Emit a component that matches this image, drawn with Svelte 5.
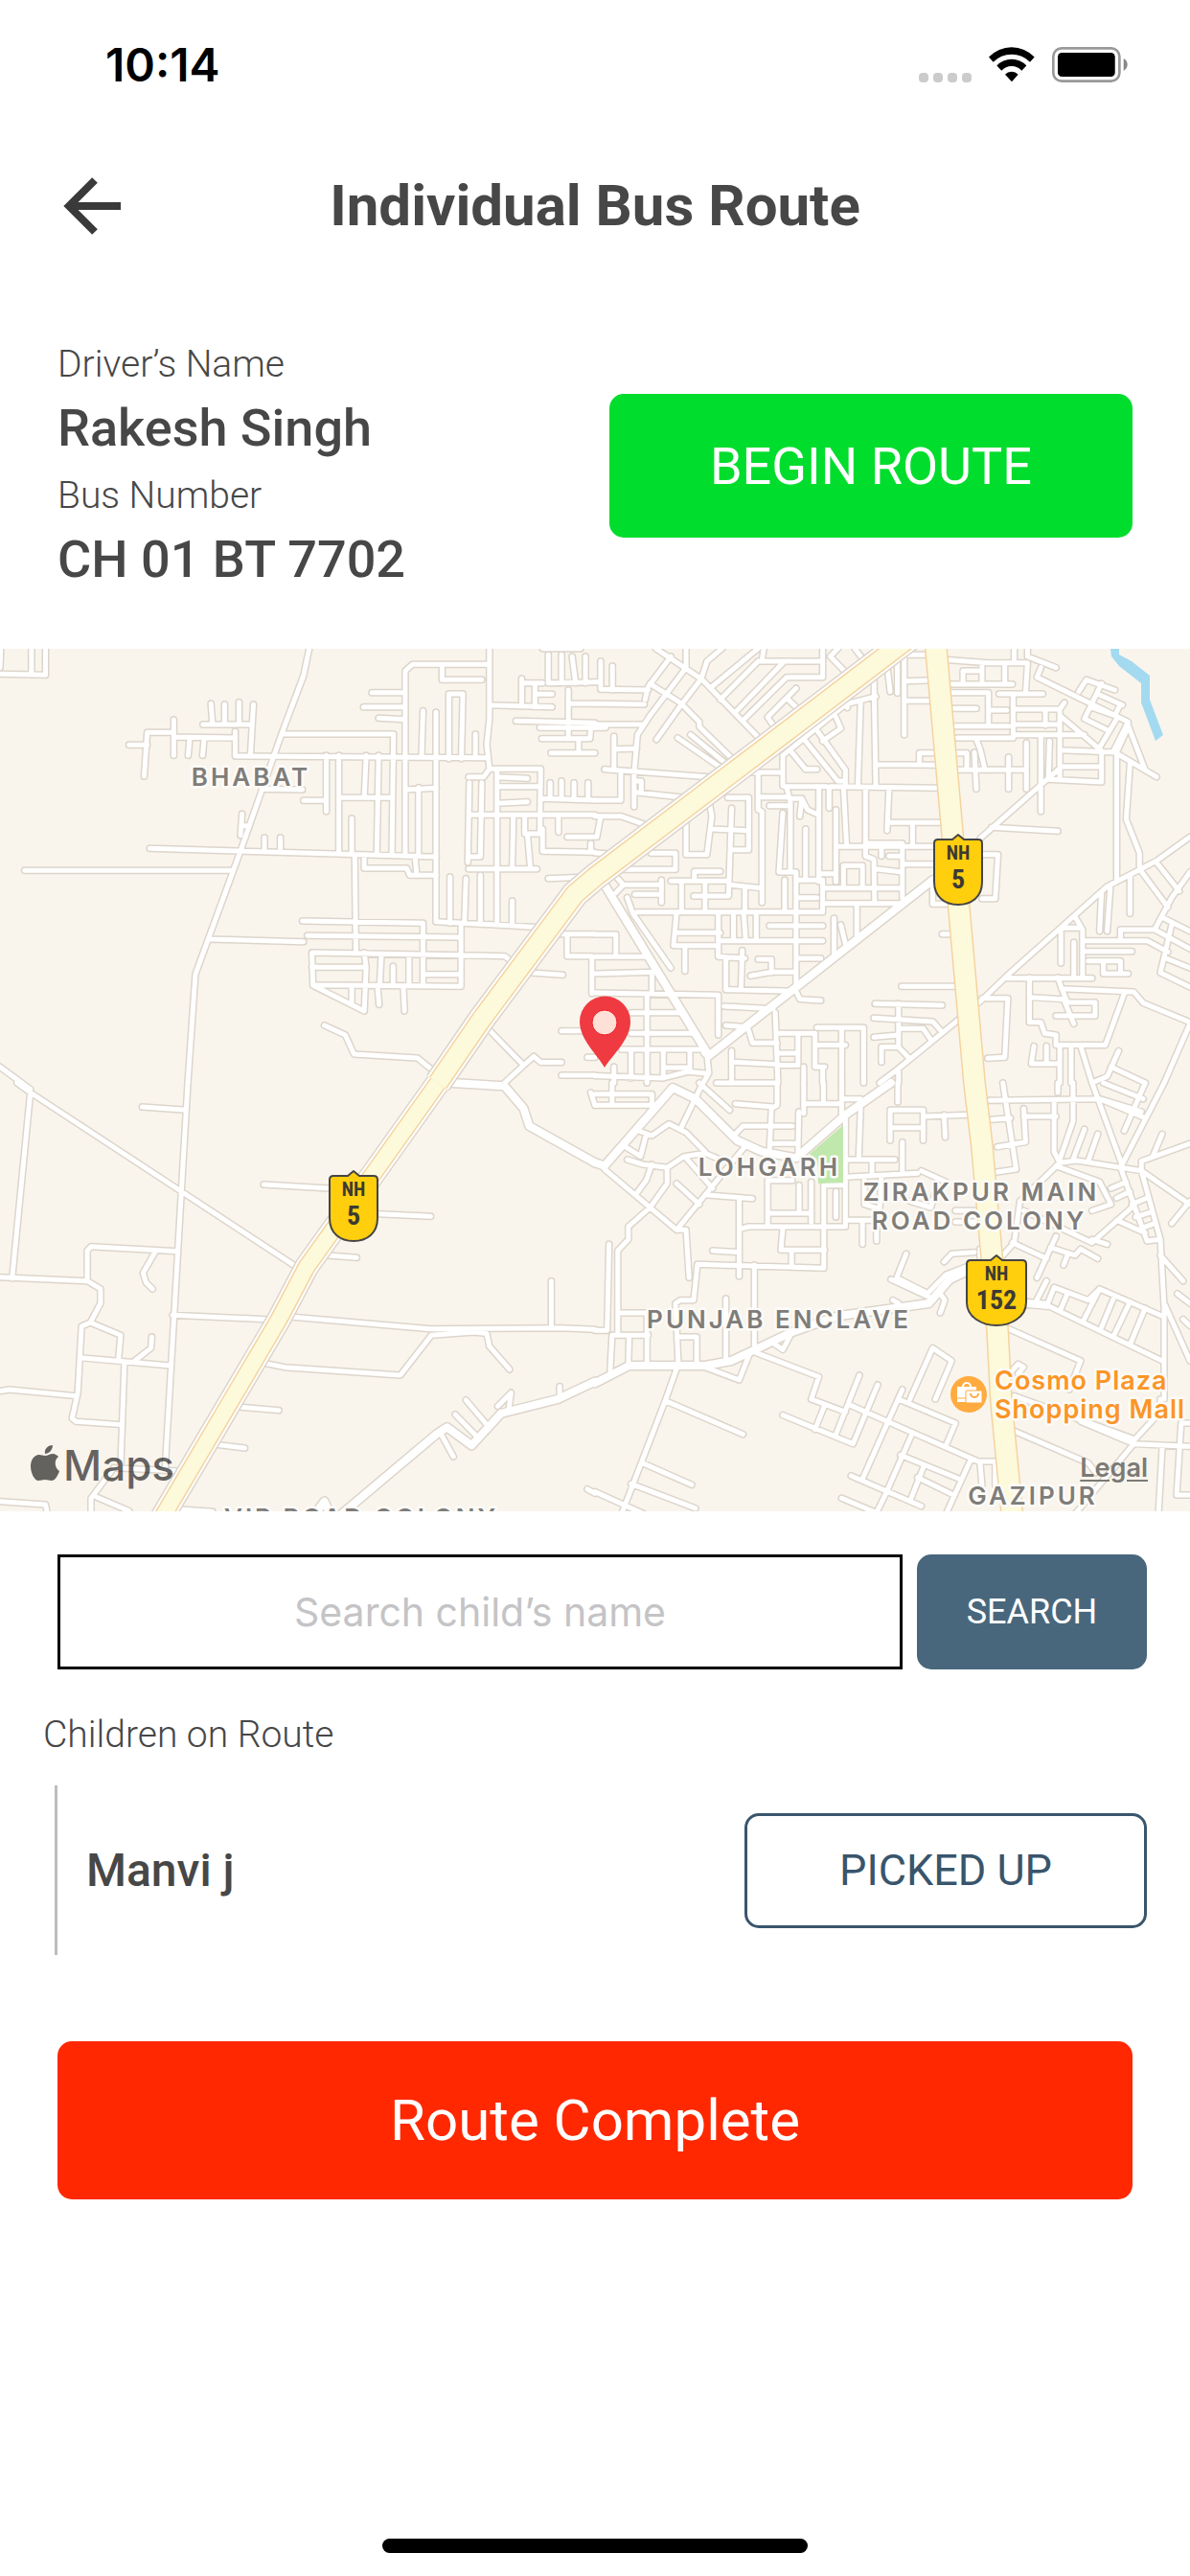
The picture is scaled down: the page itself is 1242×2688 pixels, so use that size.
<style>
  :global(body) {
    margin: 0;
    background: white;
  }

  .page {
    min-height: 100vh;
    display: flex;
    flex-direction: column;
    background: white;
    color: #474747;
    font-family: Roboto, "Liberation Sans", sans-serif;
  }

  button {
    border: none;
    border-radius: 15px;
    padding: 0;
    font-family: inherit;
    cursor: pointer;
  }

  .status-bar {
    display: flex;
    align-items: center;
    justify-content: space-between;
    height: 134px;
    padding: 0 65px 0 110px;
    box-sizing: border-box;
    color: black;
    font-family: Inter, sans-serif;
    font-size: 48px;
    font-weight: 600;
  }

  .status-icons {
    display: flex;
    align-items: flex-end;
    gap: 18px;
  }

  .dots {
    display: flex;
    gap: 5px;
  }

  .dots span {
    width: 10px;
    height: 10px;
    border-radius: 4px;
    background: #cbcbcb;
  }

  .status-icons svg {
    display: block;
  }

  .header {
    display: grid;
    grid-template-columns: 1fr auto 1fr;
    align-items: center;
    height: 162px;
    padding: 0 66px;
  }

  .back {
    justify-self: start;
    width: 60px;
    height: 60px;
    background: none;
  }

  .back svg {
    display: block;
  }

  h1 {
    margin: 0;
    font-size: 60px;
    font-weight: 700;
    line-height: 70px;
  }

  .info {
    display: flex;
    align-items: center;
    justify-content: space-between;
    padding: 60px 60px 61px;
  }

  dl {
    margin: 0;
  }

  dt,
  h2 {
    margin: 0;
    font-size: 39px;
    font-weight: 300;
    line-height: 48px;
  }

  dd {
    margin: 11px 0 14px;
    font-size: 54px;
    font-weight: 500;
    line-height: 64px;
  }

  dd:last-child {
    margin-bottom: 0;
  }

  .begin {
    width: 546px;
    height: 150px;
    background: #00dd2d;
    color: white;
    font-size: 54px;
  }

  .map {
    position: relative;
    overflow: hidden;
    background: #f9f5ed;
  }

  .map > svg {
    display: block;
    width: 100%;
    height: auto;
  }

  .map path {
    stroke-linejoin: round;
  }

  .roads path {
    fill: none;
    stroke-linecap: round;
    vector-effect: non-scaling-stroke;
  }

  .casing path {
    stroke: #ddd5cb;
  }

  .surface path {
    stroke: white;
  }

  .minor {
    stroke-width: 5px;
  }

  .major {
    stroke-width: 8px;
  }

  .casing .minor {
    stroke-width: 8px;
  }

  .casing .major {
    stroke-width: 11px;
  }

  .area {
    font-family: Inter, sans-serif;
    font-size: 26px;
    font-weight: 600;
    letter-spacing: 3px;
    text-anchor: middle;
    fill: #7f7d79;
  }

  .area,
  .poi {
    stroke: #fdfbf8;
    stroke-width: 5px;
    stroke-linejoin: round;
    paint-order: stroke;
  }

  .poi {
    font-family: Inter, sans-serif;
    font-size: 27px;
    font-weight: 600;
    letter-spacing: 1px;
    fill: #fb9526;
  }

  .shield text {
    font-family: "Roboto Condensed", Roboto, sans-serif;
    font-weight: 700;
    text-anchor: middle;
    fill: #3c3a33;
  }

  .shield .network {
    font-size: 20px;
  }

  .shield .number {
    font-size: 28px;
  }

  .brand {
    font-family: Inter, sans-serif;
    font-size: 44px;
    font-weight: 500;
  }

  .legal {
    position: absolute;
    right: 44px;
    bottom: 28px;
    color: #7c7a76;
    font-family: Inter, sans-serif;
    font-size: 27px;
    font-weight: 600;
    line-height: 34px;
    text-underline-offset: 3px;
  }

  .search {
    display: flex;
    gap: 15px;
    padding: 45px 45px 0 60px;
  }

  .search input {
    flex: 1;
    min-width: 0;
    height: 120px;
    box-sizing: border-box;
    border: 3px solid black;
    border-radius: 0;
    background: white;
    color: #474747;
    font-family: Inter, sans-serif;
    font-size: 41px;
    text-align: center;
  }

  .search input::placeholder {
    color: #c4c4c6;
    opacity: 1;
  }

  .search button {
    width: 240px;
    background: #49677c;
    color: white;
    font-size: 36px;
  }

  h2 {
    padding: 44px 45px 0;
  }

  ul {
    margin: 29px 45px 0 57px;
    padding: 0;
    list-style: none;
  }

  li {
    display: flex;
    align-items: center;
    justify-content: space-between;
    height: 177px;
    border-left: 3px solid #bdbdbd;
    padding-left: 30px;
    font-size: 48px;
    font-weight: 500;
  }

  .picked {
    width: 420px;
    height: 120px;
    border: 3px solid #39556c;
    background: white;
    color: #39556c;
    font-size: 45px;
  }

  .complete {
    margin: 90px 60px 0;
    height: 165px;
    background: #ff2800;
    color: white;
    font-size: 60px;
  }

  .home-indicator {
    width: 444px;
    height: 15px;
    margin: auto auto 24px;
    border-radius: 8px;
    background: black;
  }
</style>

<script lang="ts">
  let search = "";

  const driver = { name: "Rakesh Singh", bus: "CH 01 BT 7702" };
  const children = [{ name: "Manvi j", status: "PICKED UP" }];

  // Each tile keeps its own coordinates and is placed on the map by its transform.
  const tiles = [
    {
      transform: "translate(0 -7) scale(0.396 0.3333)",
      major: "",
      minor: `M0 100L120 103V20M83 20V103M0 80L2 20M815 20L800 105L742 288L635 650L515 1040L495 1380
        M742 288H1037L1033 660M620 280V357L1285 362M340 322H388M380 420L388 283H458M458 243V355M458 297L620 300
        M500 300L496 355M538 300L534 355M535 258H663M556 193L560 255M592 195V255M630 188V255M668 195L660 355
        M395 646L1150 672M65 715H612M638 538L634 605M640 575H655M697 612V648M739 612V648M690 460L797 462
        M860 355V530M800 496H860M893 355V655M965 355L960 487M998 355L993 665M893 487H1033M927 552V660M935 668L938 968
        M1068 670V90L1087 70H1290M1165 70V118H1270M980 158H1068M958 203H1068M998 238L1068 242
        M1290 20V240L1283 320L1290 397M1115 215L1111 360M1149 220V672M1183 365V162H1220L1216 365M1253 288V360
        M1068 462L1150 457M1103 455V670M1094 675L1098 725M960 670V708H1072L1080 730H1150M1149 672V875L1425 893
        M1186 735V880M1228 740L1224 880M1266 730V880M1310 397V885M1350 810V885
        M1235 422H1275L1290 397H1425L1423 600M1237 440L1233 690M1270 440L1266 672H1235M1310 422L1390 427
        M1310 452H1425M1310 505L1390 500M1237 541H1568M1235 710H1415M1353 541L1350 710M1383 541V600H1425
        M1390 600L1398 710M1430 585V655L1568 658M1472 548V595M1495 610H1568M1557 630V655M1425 490L1568 495
        M1450 440V490M1480 435V490M1513 440V490M1550 440V490M1445 740L1535 736
        M1290 197L1455 203M1375 115V200M1375 128H1430M1410 128V203M1410 163H1455M1360 247L1568 253M1423 268H1568
        M1428 302H1555L1557 268M1452 347H1568M1525 302V347M1498 150V302M1498 193H1568M1445 40V128L1568 125
        M1480 40V128M1508 45L1517 128M1543 45V128M1430 20H1530
        M797 873L1115 880V1075M810 919L1215 924M1215 880V1078L825 1073L822 972L1330 983L1355 1005M822 1018H965
        M960 972L965 1018L960 1155L825 1075M927 1075V1130M1005 980L1001 1073M1036 1015V1073M1078 980V1073
        M1115 1040H1215M995 1075L999 1135M1063 1078L1066 1155M555 930L800 938
        M855 1200L910 1230L933 1290L1100 1302L1150 1350M1290 1215L1380 1325L1330 1380M1380 1325L1407 1297L1425 1316H1480
        M1475 914H1568M1495 914V983H1560V1100M1400 1035L1483 1042M1480 1217H1568M1548 1300H1568M1480 1356H1568M0 1330L80 1400`,
    },
    {
      transform: "translate(621 -7) scale(0.396 0.3333)",
      major: "M20 750L300 1295L890 745M300 1295L290 1285",
      minor: `M15 60V148L140 150M46 75V150M0 125H15M0 193L130 195M0 258H128M0 268H28M200 45L140 140L132 180
        M160 20L280 115L440 310M240 20V80L145 230L112 290L103 410V515M335 20L295 60L280 115L225 200L162 305
        M145 130L225 190L275 250V265L370 375M218 300L340 400M252 290L350 385M50 295V400M55 335L110 333M25 398L300 422
        M68 405V495H0M103 435H122V470M105 470L235 487M0 545H68L140 575M15 545L5 610M0 660L30 662
        M430 20L308 140M430 60H600M600 20V110H505L390 245M430 60L330 180M495 65L370 220M445 20L440 58
        M640 20L620 45L665 100M685 20L710 60M530 145L455 235L475 270M505 175L540 215
        M735 100L740 450M740 170L660 195L495 355V450M650 190L665 205M770 75L778 155M797 55V160M815 45V290M815 40H870
        M815 122L875 120M815 184H880M700 190L693 450M575 260L660 400V450M555 310L640 435H660M635 235L648 270L600 310
        M515 340L555 398H585M400 408H495M500 452H610M620 452L905 457M740 383L897 385M855 383V347H890
        M430 410V525L440 530V815M430 485H505M460 512H510M505 455L515 500V720M545 490L540 545M520 490H545L560 525L588 540
        M590 455V750M617 455V520M635 525V750M655 455L663 635M713 455V670L735 680L737 815M775 455L770 590M775 565H910
        M837 565V640M640 640H890M713 630H810V800M755 630V670M775 670H810M810 695H890M740 710L810 720M655 765V700H705V770
        M590 725H635M600 770H810M300 495L308 545L295 665H240V550M310 585L400 590M350 487H405V650H360M360 520L352 795H260
        M148 661H212V712H60M262 745V718H330M200 748H350M290 748V840M355 760L440 770M395 770V845M495 535L485 720H530V1085
        M555 585V745M530 745H600V845M500 745V845M530 800H585M600 818H810M690 820V920M630 865V980M648 885L660 945
        M45 720L75 760H175M175 745V815M105 790H175M55 785L75 760M85 800L100 850L200 1020M110 845H600M215 845L207 950H325
        M228 748V845M215 910H330M325 850V985L395 990M237 955V1030M365 850V930M392 850L397 930M425 850V930M330 935H600
        M460 888H600M530 990H595M345 990V1088L530 1093L540 1118L595 1122M388 965L385 1085M430 993H465V1035M410 1045L465 1033H530
        M0 915H55V980M0 985H140M0 1038L160 1033M0 1098L325 1105V1230M150 1040V1100M137 1100V1380M95 1160H230M95 1225H260
        M70 1275H285M95 1275V1365M180 1275V1360M50 1330V1380M0 1358L180 1365L245 1345L290 1350M250 1275V1345M180 1332H240
        M340 1140L470 1148M345 1200L400 1205M475 1160L482 1380M405 1215L415 1255H480M480 1225H580V1330H605M585 1207H708V1380
        M650 1207V1380M585 1262H660M360 1280V1380M365 1315L480 1322M480 1287H535M535 1230V1325H480M550 1330V1380
        M295 1290L300 1350L285 1380M600 1330V1380
        M920 55L1035 65H1140L1135 155M1140 20V45L1215 80M1105 20V60M1175 80L1165 110L1405 250L1365 345M1020 70V130
        M970 130V90H1020M1080 70V125M940 132H1100M940 158H1037V260M945 208H1005M1037 213H1085M950 263H1090M1065 162H1180
        M1102 170V300H955M1105 210H1225L1237 190M1187 215V260M1105 258H1225M1105 290H1290M1225 210V430M1225 230L1335 340
        M1175 290V530M1198 310L1195 430M1137 315V460M1090 360V460M960 400H1137M1005 305L1015 335L1028 400M1000 345L1005 460
        M950 347H980V400M1225 338L1370 345L1480 422M1405 260L1450 400M1400 280L1375 345V750M1410 380L1400 555L1435 660V700
        M1335 130L1290 240L1350 275M1335 345V438L1195 430M1225 390H1335M1370 150L1295 118L1275 155M1390 197L1330 165
        M1310 205L1370 230L1385 195M1330 330L1375 240M1045 580L1220 592M1020 665H1062L1055 803H1020M890 745V820H940
        M915 914H940M808 1078H950M1015 615L1220 400
        M1568 610L1480 685L1350 765L1090 1040L1020 1120L950 1190L800 1335L750 1380M1410 730V850M1435 710L1510 830
        M1480 690L1540 780M1568 720L1520 800L1475 900M1335 780L1330 905M1358 770L1350 905M1265 860L1285 900V1050M1230 895H1280
        M1228 905V1005M1262 940V1050M1285 935H1455L1510 970M1385 935V900H1475L1568 960M1500 865L1568 905
        M1520 885L1490 1035L1568 1080M1295 968H1415M1300 998H1385V1038H1340V1000M1385 1038H1405M1085 1052H1310
        M1145 1050V1190H1175L1185 1225L1215 1230V1262H1345L1395 1100M1220 1050L1230 1085L1420 1095L1445 1130L1568 1190
        M1150 1112L1235 1118L1262 1195M1230 1085L1245 1128H1318V1170H1215M1505 990L1568 1020M1020 1115H1088L1080 1300L1035 1303
        M1568 1195L1500 1380M1157 1265L1150 1320H1220M1190 1265V1315M1225 1262V1380M1255 1262V1380M1280 1265L1310 1380
        M1380 1280L1350 1360L1310 1380M1360 1330L1450 1380M738 1132L915 1137M735 1177L890 1188L910 1215
        M735 1237L800 1230M800 1132V1265M805 1210H865L885 1245M755 1315V1268H800L830 1305M800 1345V1380`,
    },
    {
      transform: "translate(0 453) scale(0.396 0.3333)",
      major: `M1190 0L1330 10L1380 80L1395 135L1568 250M900 1350L1150 1100L1178 1078L1243 1135L1320 1035L1470 990L1568 935
        M830 1350L855 1310L870 1350`,
      minor: `M45 0L80 30L780 575M80 30L32 612M0 608L230 620L265 645V690L238 750L215 762L205 970L190 1050L200 1060L320 1070
        M230 620V525L240 512L468 527M495 0L480 300L435 1210M375 75L490 85M410 527L377 595L385 625L402 645
        M238 750L318 790L312 870M210 860L450 885M400 795L398 830L355 870M328 875L318 1200M0 965L25 960L200 980
        M300 1205L470 1215M300 1205L240 1300V1350M255 1297L340 1340M0 1310L120 1320L125 1350M455 727L700 740
        M765 732L1135 770L1480 767L1568 772M1453 620V767M700 878L750 890L1055 915L1137 790L1250 780L1283 785L1290 825L1343 897
        M695 318L868 330M1000 410L1135 418M865 540L940 547M635 1015L735 1025M575 1133L645 1143M475 1335L560 1342
        M1165 1105L1195 1170M1200 1038L1255 1105M1228 993L1283 1070M1312 1012L1347 970L1340 1030M1475 950V985
        M1548 1272L1568 1285M1557 30L1568 70`,
    },
    {
      transform: "translate(621 453) scale(0.396 0.3333)",
      major: `M0 250L25 260L205 15L265 50L375 180L440 215L530 235L660 100L780 0
        M0 940L90 885H290L360 870L520 780L640 730L880 690L935 615L980 590M1140 690L1190 695`,
      minor: `M0 35H150V70M0 70H160M45 0V70M320 0H480V70L465 80L460 210M370 65L470 75M275 0L355 85M280 10L225 145
        M115 150L150 165L195 128L240 155L290 215M135 160L120 230L80 200M85 240L125 255L190 265L235 230L290 220L330 240
        M150 255L135 305L110 345M190 265V315L145 390L88 450V490L60 525V790M25 270L215 460L370 235L395 200M240 235L310 330
        M215 315L275 380M215 460H240L248 610M290 350L415 362M380 360V605M380 458L405 450H655M37 505L32 775H0
        M370 160L390 135H520M460 190H530M537 90L535 230M550 0V95M602 0V65M550 65H650M650 0V100M700 80L695 240
        M660 100V450M650 50H700M798 0V60M665 240H790M730 245V285M810 185V285M660 295L850 283M455 450V305H520
        M460 408H570M538 320V400M570 310V435M603 455V580L270 568L260 680H225L212 690L220 890M603 455V320H655M635 340V420
        M495 455L490 523H605M518 530V570M310 525L380 530M420 570V820M345 675V865M660 430H740M705 430V505M742 430V495
        M60 720H140M45 790H140M45 790L40 900M90 795L88 880M137 720V880M220 795H268V880
        M778 180V85H865V180M780 140H865M865 105L985 100M920 100L923 170M820 535L795 610L870 655M780 615L880 670
        M880 655L925 600L980 575M920 560L940 535L1000 530M1015 520V545M910 660L922 680L910 720M785 680L800 690
        M470 815L495 835L515 790M425 845L590 920L570 990L660 1030M290 890L380 930L410 840M215 895L185 995L70 1350
        M185 995L390 1100M125 1190L255 1258M95 1255L265 1332M0 1280L130 1350M495 1040L680 1130L745 945M605 1010L580 1085
        M697 915L635 1100M675 1010L1010 1185H1060M810 960L705 1240M800 990L950 1065L925 1135M890 830L830 990
        M890 830L940 870L897 990M675 1230L860 1325M835 1100L765 1290L740 1350M805 1165L960 1240M865 1205L830 1310
        M850 1235L945 1290M650 1300L740 1345M990 1180L925 1350M1015 1190L1020 1260M1055 1185V1260M860 275L925 310
        M710 300V380L750 395L755 290M830 370L885 390L900 330M950 400H1010M950 435H1010
        M1040 55L1330 50L1440 90M1075 0L1110 270L1055 280M1130 80L1135 185L1060 200M1045 115L1095 110M1130 105H1215
        M1220 0V30M1210 60V215L1225 250L1120 370L1105 500L1075 540M1260 0V120L1225 240M1310 0L1390 260M1330 50L1450 110
        M1500 0L1385 265M1450 0L1395 150M1340 0L1445 50M1225 250L1270 243L1440 275L1568 380M1290 145L1260 240
        M1325 160L1300 245M1568 190L1440 245V275L1490 490L1500 700V990M1385 265L1455 495L1490 490M1495 160L1470 230
        M1568 370L1520 440M1215 260L1330 310L1360 380L1310 400M1360 330L1400 310M1375 360L1410 340
        M1415 390L1310 500L1130 400M1415 380L1455 360M1425 420L1465 405M1440 455L1475 440M1375 430L1450 470M1100 500L1190 550
        M1215 480L1165 610M1200 515L1265 540L1280 520L1325 550M1245 540L1235 570M1310 490L1350 505M1490 540L1550 620
        M1535 660L1568 690M1500 690L1568 870M1550 740L1568 760
        M1190 620L1160 690M1190 695L1495 870M1190 700L1210 640L1300 680L1330 645L1495 730M1245 660L1225 715M1330 645L1285 750
        M1370 665L1335 765M1410 685L1370 785M1450 705L1410 820M1090 770L1280 870L1250 960M1105 1090L1300 1190L1320 1220
        M1105 980L1420 1115M1280 1060L1420 1130L1568 1138M1420 1130L1265 1350M1420 1120L1490 1030V990M1495 1140L1485 1350
        M1568 1065H1545L1533 1290H1568M1100 900L1115 880L1130 890L1115 910`,
    },
  ];

  const highways = [
    { d: "M457 453L388 550L320 645L291 700L173 900L160 922", width: 16, shoulder: true },
    { d: "M960 -20L934 0L799 103L621 238L600 256L503 386L457 453", width: 19, shoulder: true },
    { d: "M976 -20L977 0L1017 453L1025 520L1035 633L1041 710L1045 786L1056 900V920", width: 21, shoulder: false },
  ];

  const areas = [
    { name: "BHABAT", x: 262, y: 143 },
    { name: "LOHGARH", x: 803, y: 550 },
    { name: "ZIRAKPUR MAIN", x: 1024, y: 576 },
    { name: "ROAD COLONY", x: 1022, y: 606 },
    { name: "PUNJAB ENCLAVE", x: 813, y: 709 },
    { name: "GAZIPUR", x: 1078, y: 893 },
    { name: "VIP ROAD COLONY", x: 377, y: 916 },
  ];

  const shields = [
    { number: "5", x: 1000, y: 193, half: 26 },
    { number: "5", x: 369, y: 544, half: 26 },
    { number: "152", x: 1040, y: 632, half: 32 },
  ];

  function shieldPath(half: number) {
    return `M0 1L-6 6H${-half + 5}Q${-half + 1} 6 ${-half + 1} 10V50C${-half + 1} 66 -14 74 0 74C14 74 ${half - 1} 66 ${half - 1} 50V10Q${half - 1} 6 ${half - 5} 6H6Z`;
  }
</script>

<div class="page">
  <div class="status-bar">
    <span>10:14</span>
    <div class="status-icons">
      <div class="dots"><span></span><span></span><span></span><span></span></div>
      <svg width="48" height="37" viewBox="275 57 144 110" aria-hidden="true">
        <path d="M275 88A99 99 0 0 1 418 88L404 104A80 80 0 0 0 289 104Z" />
        <path d="M300 115A64 64 0 0 1 393 115L378 131A41 41 0 0 0 315 131Z" />
        <path d="M326 143A28 28 0 0 1 367 143L347 165Z" />
      </svg>
      <svg width="79" height="37" viewBox="474 57 238 111" aria-hidden="true">
        <rect x="478" y="61" width="208" height="103" rx="26" fill="none" stroke="#999" stroke-width="8" />
        <rect x="492" y="75" width="180" height="75" rx="13" />
        <path d="M699 93Q711 100 711 112Q711 124 699 132Z" fill="#888" />
      </svg>
    </div>
  </div>

  <header class="header">
    <button class="back" aria-label="Back">
      <svg width="60" height="60" viewBox="0 0 60 60" fill="none" stroke="#3a3a3a" stroke-width="8">
        <path d="M33 3L6 30L33 57M6 30H60" />
      </svg>
    </button>
    <h1>Individual Bus Route</h1>
  </header>

  <section class="info">
    <dl>
      <dt>Driver’s Name</dt>
      <dd>{driver.name}</dd>
      <dt>Bus Number</dt>
      <dd>{driver.bus}</dd>
    </dl>
    <button class="begin">BEGIN ROUTE</button>
  </section>

  <section class="map" aria-label="Map">
    <svg viewBox="0 0 1242 900">
      <path d="M1159 0H1168V6L1181 13L1200 28V53L1214 90L1206 96L1191 56V36L1168 18L1160 8Z" fill="#a3daf0" />

      <g class="roads casing">
        {#each tiles as tile}
          <g transform={tile.transform}>
            <path class="minor" d={tile.minor} />
            <path class="major" d={tile.major} />
          </g>
        {/each}
      </g>
      <g class="roads surface">
        {#each tiles as tile}
          <g transform={tile.transform}>
            <path class="minor" d={tile.minor} />
            <path class="major" d={tile.major} />
          </g>
        {/each}
      </g>
      <path d="M880 497V557L854 558V540L845 527Z" fill="#c0e8ad" />

      <g fill="none">
        {#each highways.filter((h) => h.shoulder) as road}
          <path d={road.d} stroke="#ddd5cb" stroke-width={road.width + 10} />
        {/each}
        {#each highways.filter((h) => h.shoulder) as road}
          <path d={road.d} stroke="white" stroke-width={road.width + 7} />
        {/each}
        {#each highways as road}
          <path d={road.d} stroke="#f5d3a0" stroke-width={road.width + 3} />
        {/each}
        {#each highways as road}
          <path d={road.d} stroke="#fcfada" stroke-width={road.width} />
        {/each}
      </g>

      {#each areas as area}
        <text class="area" x={area.x} y={area.y}>{area.name}</text>
      {/each}

      <text class="poi" x="1038" y="773">Cosmo Plaza</text>
      <text class="poi" x="1038" y="803">Shopping Mall</text>
      <g transform="translate(1011 778)">
        <circle r="19" fill="#ffab40" />
        <path d="M-12 -8H8V-4H-2V8H-12Z" fill="white" />
        <path d="M-6 -8A4 4 0 0 1 2 -8" fill="none" stroke="white" stroke-width="2" />
        <path d="M-12 4H-3" stroke="#ffab40" stroke-width="1" />
        <rect x="-3" y="-4" width="17" height="13" rx="1" fill="white" stroke="#ffab40" />
        <path d="M2 -1A4 4 0 0 0 10 -1" fill="none" stroke="#ffab40" stroke-width="2" />
      </g>

      {#each shields as shield}
        <g class="shield" transform="translate({shield.x} {shield.y})">
          <path d={shieldPath(shield.half)} fill="#ffce0d" stroke="#454545" stroke-width="2" />
          <text class="network" y="27">NH</text>
          <text class="number" y="57">{shield.number}</text>
        </g>
      {/each}

      <path d="M631 437C624 424 605 408 605 389A26 26 0 0 1 658 389C658 408 639 424 631 437Z" fill="#ef3a41" />
      <circle cx="631" cy="390" r="13" fill="#ffe0d6" stroke="#ee1c25" />

      <g fill="#000" fill-opacity="0.6">
        <path
          d="M47 842C50 842 52 840 55 840C58 840 60 842 61 843C56 847 57 855 62 858C60 864 57 868 54 868C51 868 50 867 47 867C44 867 43 868 40 868C36 868 32 860 32 853C32 845 37 841 41 841C43 841 45 842 47 842ZM47 840C46 835 50 831 55 831C55 836 51 840 47 840Z"
        />
        <text class="brand" x="66" y="868">Maps</text>
      </g>
    </svg>
    <a class="legal" href="#legal">Legal</a>
  </section>

  <form class="search" onsubmit={(e) => e.preventDefault()}>
    <input bind:value={search} placeholder="Search child’s name" aria-label="Search child’s name" />
    <button type="submit">SEARCH</button>
  </form>

  <h2>Children on Route</h2>
  <ul>
    {#each children as child}
      <li>
        {child.name}
        <button class="picked">{child.status}</button>
      </li>
    {/each}
  </ul>

  <button class="complete">Route Complete</button>

  <div class="home-indicator"></div>
</div>
